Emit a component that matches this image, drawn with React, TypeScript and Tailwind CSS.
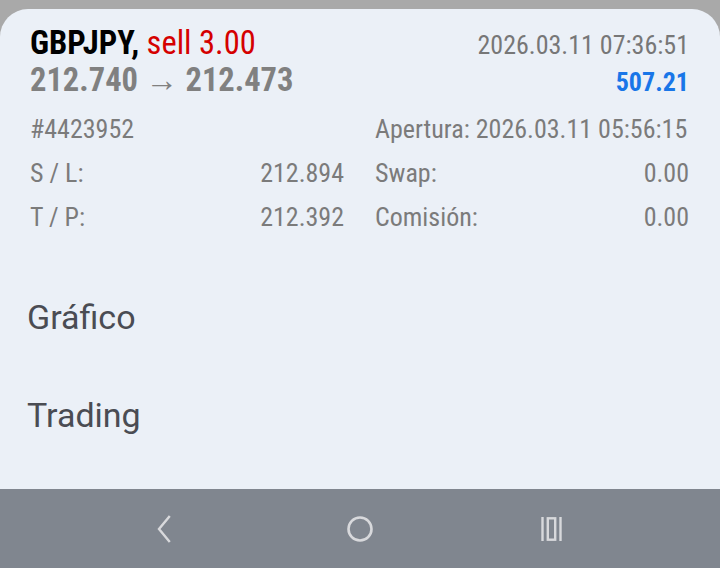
import React from "react";

export default function App() {
  return (
    <div className="w-[720px] h-[568px] bg-[#a9a9a9] flex flex-col overflow-hidden" style={{ fontFamily: "Roboto, 'Noto Sans', sans-serif" }}>
      <div className="mt-[9px] flex-1 bg-[#ebf0f7] rounded-t-[28px] flex flex-col">
        <div className="pl-[30px] pr-[31px] pt-[16px] font-stretch-condensed">
          <div className="flex justify-between items-baseline h-[37px]">
            <div className="text-[32.5px] leading-[37px] whitespace-nowrap">
              <span className="font-bold text-black">GBPJPY,</span>{" "}
              <span className="text-[#d50000]">sell 3.00</span>
            </div>
            <div className="text-[26px] leading-[37px] text-[#777777] whitespace-nowrap">2026.03.11 07:36:51</div>
          </div>
          <div className="flex justify-between items-baseline h-[36px]">
            <div className="text-[32.5px] leading-[36px] font-bold text-[#808080] whitespace-nowrap">212.740 → 212.473</div>
            <div className="text-[26px] leading-[36px] font-bold text-[#1976e8]">507.21</div>
          </div>
          <div className="grid grid-cols-2 gap-x-[31px] mt-[9px] text-[26px] leading-[44px] text-[#7b7b7b] whitespace-nowrap">
            <div>#4423952</div>
            <div>Apertura: 2026.03.11 05:56:15</div>
            <div className="flex justify-between"><span>S / L:</span><span>212.894</span></div>
            <div className="flex justify-between"><span>Swap:</span><span>0.00</span></div>
            <div className="flex justify-between"><span>T / P:</span><span>212.392</span></div>
            <div className="flex justify-between"><span>Comisión:</span><span>0.00</span></div>
          </div>
        </div>
        <div className="mt-[58px] pl-[27px] text-[34px] text-[#4a4c53] flex flex-col">
          <div className="h-[98px] leading-[40px]">Gráfico</div>
          <div className="leading-[40px]">Trading</div>
        </div>
      </div>
      <div className="h-[79px] bg-[#80868f] flex items-center justify-center relative">
        <svg className="absolute left-[150px] top-[24px]" width="28" height="32" viewBox="0 0 28 32">
          <path d="M19 4 L9 16 L19 28" fill="none" stroke="#d8d9dc" strokeWidth="2.4" strokeLinecap="square" />
        </svg>
        <svg className="absolute left-[344px] top-[23px]" width="32" height="32" viewBox="0 0 32 32">
          <circle cx="16" cy="17" r="11.5" fill="none" stroke="#d8d9dc" strokeWidth="2.6" />
        </svg>
        <svg className="absolute left-[538px] top-[23px]" width="32" height="32" viewBox="0 0 32 32">
          <rect x="3.3" y="5" width="2.4" height="24" fill="#d8d9dc" />
          <rect x="9.8" y="6.3" width="7.4" height="21.4" fill="none" stroke="#d8d9dc" strokeWidth="2.4" />
          <rect x="21.3" y="5" width="2.4" height="24" fill="#d8d9dc" />
        </svg>
      </div>
    </div>
  );
}
